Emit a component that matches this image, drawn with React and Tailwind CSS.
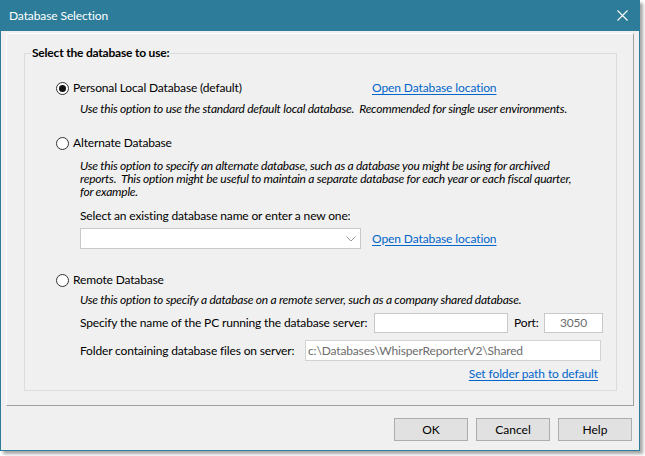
import React from "react";

const font = { fontFamily: "Lato, 'Noto Sans', sans-serif" };

function Radio({ checked, label }) {
  return (
    <div className="flex items-center h-[16px] gap-[4px]">
      <span className="w-[13px] h-[13px] rounded-full border border-[#333] bg-white flex items-center justify-center shrink-0">
        {checked && <span className="w-[7px] h-[7px] rounded-full bg-[#111]" />}
      </span>
      <span className="text-[12px] text-black leading-[16px] tracking-[-0.15px]">{label}</span>
    </div>
  );
}

function Link({ children }) {
  return (
    <span className="text-[12px] leading-[16px] text-[#0066cc] underline underline-offset-2 tracking-[-0.1px] whitespace-nowrap">
      {children}
    </span>
  );
}

export default function App() {
  return (
    <div className="w-[645px] h-[456px] bg-white" style={font}>
      <div className="w-[640px] h-[451px] flex flex-col bg-[#f0f0f0] border-x border-b border-[#2d7d9a] shadow-[3px_3px_3px_rgba(0,0,0,0.35)]">
        {/* TITLE BAR */}
        <div className="h-[31px] -mx-px bg-[#2d7d9a] flex items-center justify-between pl-[9px] pr-[12px] shrink-0">
          <span className="text-white text-[12px] tracking-[-0.1px]">Database Selection</span>
          <svg width="11" height="11" viewBox="0 0 11 11" className="text-white">
            <path d="M0.5 0.5 L10.5 10.5 M10.5 0.5 L0.5 10.5" stroke="currentColor" strokeWidth="1.1" />
          </svg>
        </div>

        {/* PANEL */}
        <div className="ml-[5px] mt-[2px] w-[628px] h-[373px] border-t border-l border-white border-r border-b border-r-[#a0a0a0] border-b-[#a0a0a0] shrink-0">
          <div className="ml-[17px] mt-[19px] w-[593px] h-[338px] border border-[#dcdcdc] text-[12px] text-black tracking-[-0.15px]">
            <div className="-mt-[9px] ml-[6px] px-[1px] w-fit bg-[#f0f0f0] font-bold leading-[16px] tracking-[-0.2px]">
              Select the database to use:
            </div>

            <div className="pl-[31px]">
              {/* Personal */}
              <div className="mt-[19px] flex items-center">
                <div className="w-[316px]">
                  <Radio checked label="Personal Local Database (default)" />
                </div>
                <Link>Open Database location</Link>
              </div>
              <div className="mt-[5px] ml-[24px] italic leading-[16px] tracking-[-0.24px] whitespace-nowrap">
                Use this option to use the standard default local database.&nbsp; Recommended for single user environments.
              </div>

              {/* Alternate */}
              <div className="mt-[18px]">
                <Radio label="Alternate Database" />
              </div>
              <div className="mt-[8px] ml-[24px] italic leading-[13px] w-[500px] tracking-[-0.24px]">
                Use this option to specify an alternate database, such as a database you might be using for archived reports.&nbsp; This option might be useful to maintain a separate database for each year or each fiscal quarter, for example.
              </div>
              <div className="mt-[10px] ml-[24px] leading-[16px]">
                Select an existing database name or enter a new one:
              </div>
              <div className="mt-[4px] ml-[24px] flex items-center">
                <div className="w-[281px] h-[21px] bg-white border border-[#c8c8c8] flex items-center justify-end pr-[4px]">
                  <svg width="10" height="6" viewBox="0 0 10 6">
                    <path d="M0.5 0.5 L5 5 L9.5 0.5" fill="none" stroke="#9a9a9a" strokeWidth="1" />
                  </svg>
                </div>
                <div className="ml-[11px]">
                  <Link>Open Database location</Link>
                </div>
              </div>

              {/* Remote */}
              <div className="mt-[23px]">
                <Radio label="Remote Database" />
              </div>
              <div className="mt-[4px] ml-[24px] italic leading-[16px] tracking-[-0.24px] whitespace-nowrap">
                Use this option to specify a database on a remote server, such as a company shared database.
              </div>
              <div className="mt-[5px] ml-[24px] flex items-center h-[20px]">
                <span className="w-[294px] leading-[16px] whitespace-nowrap">Specify the name of the PC running the database server:</span>
                <div className="w-[134px] h-[20px] bg-white border border-[#c8c8c8] shrink-0" />
                <span className="ml-[6px] w-[30px] leading-[16px]">Port:</span>
                <div className="w-[59px] h-[20px] bg-white border border-[#c8c8c8] flex items-center justify-center text-[#6d6d6d] shrink-0">
                  3050
                </div>
              </div>
              <div className="mt-[7px] ml-[24px] flex items-center h-[21px]">
                <span className="w-[225px] leading-[16px] whitespace-nowrap">Folder containing database files on server:</span>
                <div className="w-[296px] h-[21px] bg-white border border-[#d2d2d2] flex items-center pl-[2px] text-[#6d6d6d] shrink-0">
                  c:\Databases\WhisperReporterV2\Shared
                </div>
              </div>
              <div className="mt-[5px] flex justify-end pr-[18px]">
                <Link>Set folder path to default</Link>
              </div>
            </div>
          </div>
        </div>

        {/* BUTTONS */}
        <div className="mt-[12px] flex justify-end gap-[8px] pr-[7px]">
          {["OK", "Cancel", "Help"].map((b) => (
            <button
              key={b}
              className="w-[74px] h-[23px] bg-[#e1e1e1] border border-[#adadad] text-[12px] text-black"
            >
              {b}
            </button>
          ))}
        </div>
      </div>
    </div>
  );
}
